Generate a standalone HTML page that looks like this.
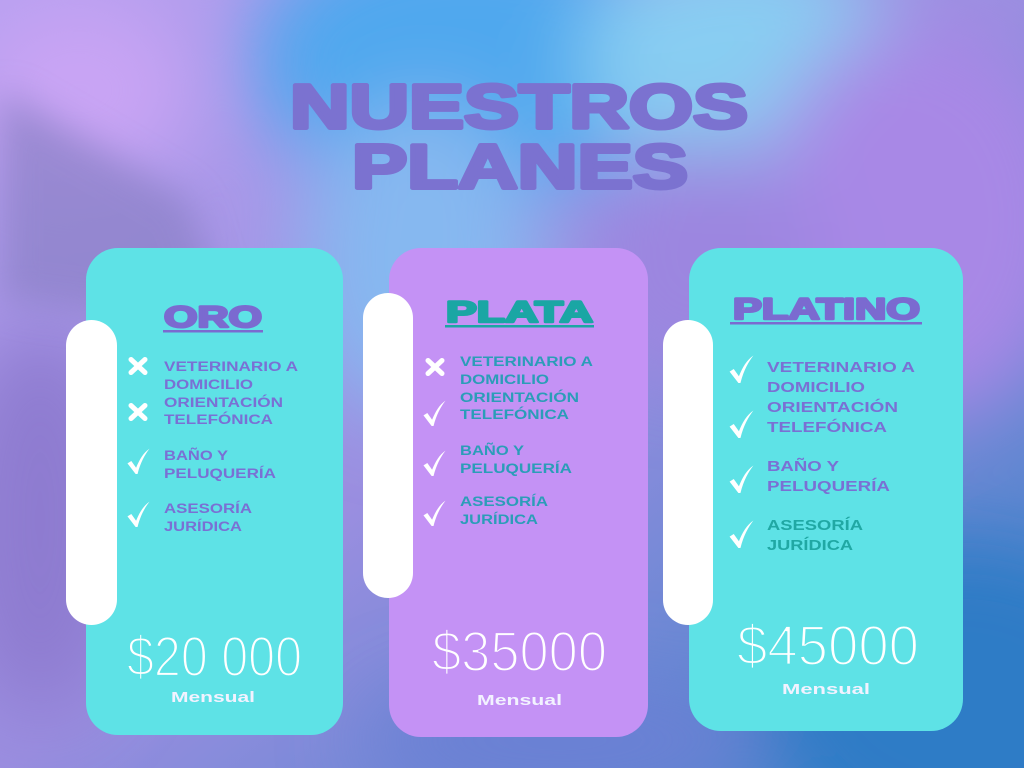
<!DOCTYPE html>
<html><head><meta charset="utf-8"><style>
html,body{margin:0;padding:0;overflow:hidden;width:1024px;height:768px}
body{position:relative;font-family:"Liberation Sans",sans-serif}
svg{display:block}
</style></head><body>
<svg width="1024" height="768" viewBox="0 0 1024 768" xmlns="http://www.w3.org/2000/svg" style="position:absolute;left:0;top:0">
<defs>
<linearGradient id="base" x1="0" y1="0" x2="1" y2="1">
<stop offset="0" stop-color="#b7a0f0"/>
<stop offset="0.5" stop-color="#9a8ee0"/>
<stop offset="1" stop-color="#3d82c8"/>
</linearGradient>
<filter id="b40" x="-50%" y="-50%" width="200%" height="200%"><feGaussianBlur stdDeviation="40"/></filter>
<filter id="b20" x="-50%" y="-50%" width="200%" height="200%"><feGaussianBlur stdDeviation="18"/></filter>
<symbol id="chk" viewBox="0 0 24 28"><path d="M0.5,16 L4.5,13.5 L9.5,20.5 C13,12 17,5 23.5,0.5 C18.5,7 14,15 11,27 L9,27 Z" fill="#fff"/></symbol>
<symbol id="xx" viewBox="0 0 20 18"><path d="M3,2.5 L17,15.5 M17,2.5 L3,15.5" stroke="#fff" stroke-width="5" stroke-linecap="round"/></symbol>
</defs>
<rect width="1024" height="768" fill="url(#base)"/>
<g filter="url(#b40)">
<ellipse cx="470" cy="60" rx="220" ry="140" fill="#4fa8ee"/>
<ellipse cx="740" cy="60" rx="160" ry="120" fill="#88cdf2"/>
<ellipse cx="420" cy="260" rx="120" ry="160" fill="#86b8f0"/>
<ellipse cx="920" cy="220" rx="160" ry="200" fill="#a888e6"/>
<ellipse cx="700" cy="260" rx="120" ry="120" fill="#9c86e0"/>
<ellipse cx="80" cy="90" rx="110" ry="90" fill="#c9a4f4"/>
<ellipse cx="960" cy="700" rx="200" ry="160" fill="#2f7cc6"/>
<ellipse cx="560" cy="740" rx="200" ry="60" fill="#6a80d4"/>
<ellipse cx="40" cy="520" rx="90" ry="200" fill="#8e7cd0"/>
</g>
<path d="M0,90 L190,200 L230,330 L0,300 Z" fill="#8a80c6" opacity="0.7" filter="url(#b20)"/>

<!-- Title -->
<g fill="#7b72d0" stroke="#7b72d0" stroke-width="4" stroke-linejoin="round" font-family="Liberation Sans" font-weight="bold">
<text x="290" y="128" font-size="62" textLength="458" lengthAdjust="spacingAndGlyphs">NUESTROS</text>
<text x="352" y="188" font-size="62" textLength="336" lengthAdjust="spacingAndGlyphs">PLANES</text>
</g>

<!-- Cards -->
<rect x="86" y="248" width="257" height="487" rx="32" fill="#5ee2e6"/>
<rect x="389" y="248" width="259" height="489" rx="32" fill="#c492f5"/>
<rect x="689" y="248" width="274" height="483" rx="32" fill="#5ee2e6"/>

<rect x="66" y="320" width="51" height="305" rx="25.5" fill="#fff"/>
<rect x="363" y="293" width="50" height="305" rx="25" fill="#fff"/>
<rect x="663" y="320" width="50" height="305" rx="25" fill="#fff"/>

<!-- card titles -->
<g font-weight="bold" stroke-width="2.5" stroke-linejoin="round">
<text x="164" y="327" font-size="30" fill="#7b6ad0" stroke="#7b6ad0" textLength="98" lengthAdjust="spacingAndGlyphs">ORO</text>
<rect x="163" y="330" width="100" height="2.5" fill="#7b6ad0"/>
<text x="446" y="322" font-size="30" fill="#1aa6a4" stroke="#1aa6a4" textLength="147" lengthAdjust="spacingAndGlyphs">PLATA</text>
<rect x="445" y="325" width="149" height="2.5" fill="#1aa6a4"/>
<text x="733" y="319" font-size="30" fill="#7b6ad0" stroke="#7b6ad0" textLength="187" lengthAdjust="spacingAndGlyphs">PLATINO</text>
<rect x="730" y="322" width="192" height="2.5" fill="#7b6ad0"/>
</g>

<!-- card1 items -->
<g font-weight="bold" font-size="13.5" fill="#7a70d4" lengthAdjust="spacingAndGlyphs">
<text x="164" y="371" textLength="134" lengthAdjust="spacingAndGlyphs">VETERINARIO A</text>
<text x="164" y="389" textLength="89" lengthAdjust="spacingAndGlyphs">DOMICILIO</text>
<text x="164" y="407" textLength="119" lengthAdjust="spacingAndGlyphs">ORIENTACIÓN</text>
<text x="164" y="424" textLength="109" lengthAdjust="spacingAndGlyphs">TELEFÓNICA</text>
<text x="164" y="460" textLength="64" lengthAdjust="spacingAndGlyphs">BAÑO Y</text>
<text x="164" y="478" textLength="112" lengthAdjust="spacingAndGlyphs">PELUQUERÍA</text>
<text x="164" y="513" textLength="88" lengthAdjust="spacingAndGlyphs">ASESORÍA</text>
<text x="164" y="531" textLength="78" lengthAdjust="spacingAndGlyphs">JURÍDICA</text>
</g>
<use href="#xx" x="128" y="357" width="20" height="18"/>
<use href="#xx" x="128" y="403" width="20" height="18"/>
<use href="#chk" x="127" y="448" width="23" height="27"/>
<use href="#chk" x="127" y="501" width="23" height="27"/>

<!-- card2 items -->
<g font-weight="bold" font-size="13.5" fill="#2b9db8">
<text x="460" y="366" textLength="133" lengthAdjust="spacingAndGlyphs">VETERINARIO A</text>
<text x="460" y="384" textLength="89" lengthAdjust="spacingAndGlyphs">DOMICILIO</text>
<text x="460" y="402" textLength="119" lengthAdjust="spacingAndGlyphs">ORIENTACIÓN</text>
<text x="460" y="419" textLength="109" lengthAdjust="spacingAndGlyphs">TELEFÓNICA</text>
<text x="460" y="455" textLength="64" lengthAdjust="spacingAndGlyphs">BAÑO Y</text>
<text x="460" y="473" textLength="112" lengthAdjust="spacingAndGlyphs">PELUQUERÍA</text>
<text x="460" y="506" textLength="88" lengthAdjust="spacingAndGlyphs">ASESORÍA</text>
<text x="460" y="524" textLength="78" lengthAdjust="spacingAndGlyphs">JURÍDICA</text>
</g>
<use href="#xx" x="425" y="358" width="20" height="18"/>
<use href="#chk" x="423" y="400" width="23" height="27"/>
<use href="#chk" x="423" y="450" width="23" height="27"/>
<use href="#chk" x="423" y="500" width="23" height="27"/>

<!-- card3 items -->
<g font-weight="bold" font-size="14.5" fill="#7a70d4">
<text x="767" y="372" textLength="148" lengthAdjust="spacingAndGlyphs">VETERINARIO A</text>
<text x="767" y="392" textLength="98" lengthAdjust="spacingAndGlyphs">DOMICILIO</text>
<text x="767" y="412" textLength="131" lengthAdjust="spacingAndGlyphs">ORIENTACIÓN</text>
<text x="767" y="432" textLength="120" lengthAdjust="spacingAndGlyphs">TELEFÓNICA</text>
<text x="767" y="471" textLength="72" lengthAdjust="spacingAndGlyphs">BAÑO Y</text>
<text x="767" y="491" textLength="123" lengthAdjust="spacingAndGlyphs">PELUQUERÍA</text>
<text x="767" y="530" textLength="96" lengthAdjust="spacingAndGlyphs" fill="#20a8a4">ASESORÍA</text>
<text x="767" y="550" textLength="86" lengthAdjust="spacingAndGlyphs" fill="#20a8a4">JURÍDICA</text>
</g>
<use href="#chk" x="729" y="355" width="25" height="29"/>
<use href="#chk" x="729" y="410" width="25" height="29"/>
<use href="#chk" x="729" y="465" width="25" height="29"/>
<use href="#chk" x="729" y="520" width="25" height="29"/>

<!-- prices (thinned by card-coloured stroke) -->
<g font-size="57" stroke-width="2.2">
<text x="127" y="676" textLength="175" lengthAdjust="spacingAndGlyphs" fill="#fff" stroke="#5ee2e6">$20 000</text>
<text x="432" y="671" textLength="175" lengthAdjust="spacingAndGlyphs" fill="#fff" stroke="#c492f5">$35000</text>
<text x="737" y="665" textLength="182" lengthAdjust="spacingAndGlyphs" fill="#fff" stroke="#5ee2e6">$45000</text>
</g>
<g fill="#f2f2ff" font-weight="bold" font-size="15">
<text x="171" y="702" textLength="84" lengthAdjust="spacingAndGlyphs">Mensual</text>
<text x="477" y="705" textLength="85" lengthAdjust="spacingAndGlyphs">Mensual</text>
<text x="782" y="694" textLength="88" lengthAdjust="spacingAndGlyphs">Mensual</text>
</g>
</svg>
</body></html>
